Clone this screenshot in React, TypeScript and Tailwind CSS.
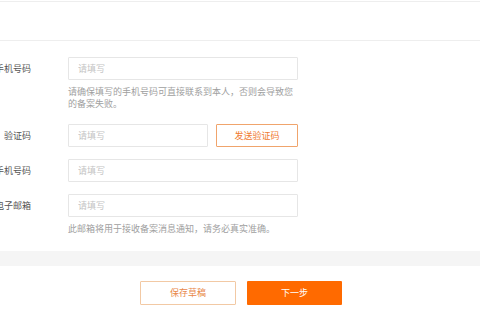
import React from "react";

const font = { fontFamily: '"Noto Sans CJK SC", "Noto Sans", sans-serif' };

function Field({ w = "w-[230px]" }: { w?: string }) {
  return (
    <input
      placeholder="请填写"
      className={`block ${w} h-[23px] border border-[#e6e6e6] bg-white pl-[9px] text-[9px] text-[#333] placeholder:text-[#c4c4c4] outline-none rounded-[1px]`}
      style={font}
    />
  );
}

function Label({ text }: { text: string }) {
  return (
    <div className="w-[31px] h-[23px] flex justify-end items-center whitespace-nowrap text-[9px] text-[#555] shrink-0">
      {text}
    </div>
  );
}

export default function App() {
  return (
    <div className="w-[480px] h-[320px] bg-white overflow-hidden" style={font}>
      <div className="mt-[1px] h-[40px] border-y border-[#eeeeee] bg-white" />
      <div className="pt-[16px]">
        <div className="flex">
          <Label text="手机号码" />
          <div className="ml-[37px] flex flex-col">
            <Field />
            <div className="mt-[6px] w-[230px] text-[9px] leading-[12px] text-[#a0a0a0]">
              请确保填写的手机号码可直接联系到本人，否则会导致您的备案失败。
            </div>
          </div>
        </div>
        <div className="flex mt-[14px]">
          <Label text="验证码" />
          <div className="ml-[37px] flex">
            <Field w="w-[140px]" />
            <button className="ml-[8px] w-[82px] h-[23px] border border-[#f0a46c] text-[9px] text-[#f07a30] bg-white rounded-[1px]">
              发送验证码
            </button>
          </div>
        </div>
        <div className="flex mt-[12px]">
          <Label text="手机号码" />
          <div className="ml-[37px]">
            <Field />
          </div>
        </div>
        <div className="flex mt-[12px]">
          <Label text="电子邮箱" />
          <div className="ml-[37px] flex flex-col">
            <Field />
            <div className="mt-[6px] w-[230px] text-[9px] leading-[12px] text-[#a0a0a0] whitespace-nowrap">
              此邮箱将用于接收备案消息通知，请务必真实准确。
            </div>
          </div>
        </div>
        <div className="mt-[16px] h-[15px] bg-[#f5f5f5]" />
        <div className="flex mt-[15px]">
          <button className="ml-[140px] w-[96px] h-[24px] border border-[#f2c9a4] bg-white text-[9px] text-[#e8874a] rounded-[1px]">
            保存草稿
          </button>
          <button className="ml-[11px] w-[95px] h-[24px] bg-[#ff6a00] text-[9px] text-white rounded-[1px]">
            下一步
          </button>
        </div>
      </div>
    </div>
  );
}
